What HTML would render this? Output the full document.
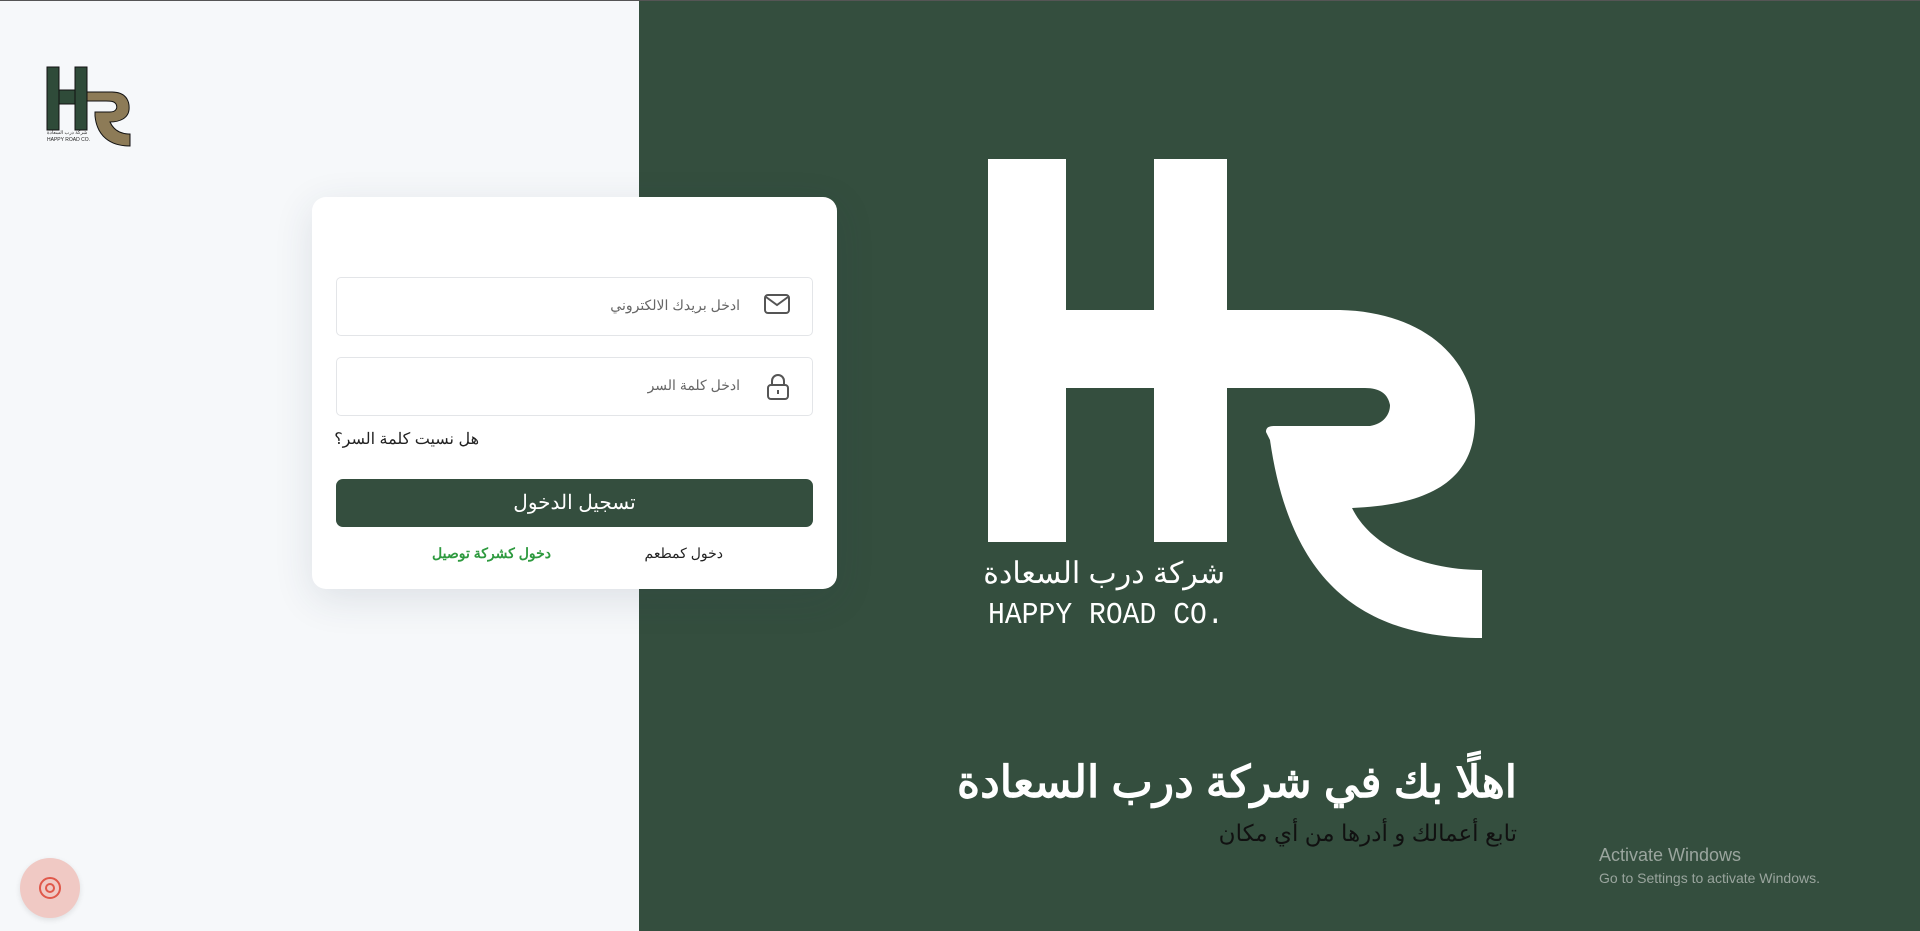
<!DOCTYPE html>
<html><head><meta charset="utf-8"><style>
*{box-sizing:border-box;margin:0;padding:0}
body{width:1920px;height:931px;overflow:hidden;background:#f6f8fa;font-family:"Liberation Sans","Noto Sans CJK SC",sans-serif;position:relative}
.topline{position:absolute;left:0;top:0;width:1920px;height:1px;background:#555}
.right{position:absolute;left:639px;top:1px;width:1281px;height:930px;background:#344e3e}
.card{position:absolute;left:312px;top:197px;width:525px;height:392px;background:#fff;border-radius:14px;box-shadow:0 10px 40px rgba(40,60,80,.12)}
.inp{position:absolute;left:24px;width:477px;height:59px;border:1px solid #e3e5e8;border-radius:5px;direction:rtl;font-size:14px;color:#666}
.inp span{position:absolute;right:72px;top:19px}
.inp svg{position:absolute;right:22px;top:16px}
.t{position:absolute;white-space:nowrap;direction:rtl}
</style></head><body>
<div class="topline"></div>
<div class="right"></div>
<svg style="position:absolute;left:0;top:0" width="1920" height="931">
<g fill="#fff">
<rect x="988" y="159" width="78" height="383"/>
<rect x="1154" y="159" width="73" height="383"/>
<rect x="1066" y="310" width="88" height="78"/>
<path d="M1227,310 L1340,310 C1425,312 1475,360 1475,420 C1475,480 1430,505 1352,508 C1370,545 1420,570 1482,570 L1482,638 C1360,638 1290,580 1270,440 L1266,432 C1266,428 1268,426 1275,426 L1370,426 C1383,424 1390,415 1390,405 C1388,394 1380,388 1365,388 L1227,388 Z"/>
</g>
<g>
<rect x="47" y="67" width="12" height="63" fill="#2f4b39" stroke="#111" stroke-width="1"/>
<rect x="75" y="67" width="12" height="63" fill="#2f4b39" stroke="#111" stroke-width="1"/>
<rect x="59" y="90" width="16" height="14" fill="#2f4b39" stroke="#111" stroke-width="1"/>
<path d="M87,92 L112,92 C125,92 130,100 129,110 C128,118 120,122 110,122 C114,131 122,134 130,134 L130,146 C110,146 97,136 95,116 L95,112 L110,112 C116,112 118,108 116,104 C114,101 110,101 106,101 L87,101 Z" fill="#8d7b57" stroke="#111" stroke-width="1"/>
</g>
</svg>
<div class="t" style="left:47px;top:130px;font-size:5px;color:#333">شركة درب السعادة</div>
<div class="t" style="left:47px;top:137px;font-size:5px;color:#222;direction:ltr">HAPPY ROAD CO.</div>
<div class="t" style="left:969px;top:556px;font-size:30px;color:#fff;width:256px;text-align:right;font-weight:300">شركة درب السعادة</div>
<div class="t" style="left:988px;top:598px;font-size:31px;color:#fff;direction:ltr;font-family:'Liberation Mono',monospace;transform:scaleX(0.905);transform-origin:left top">HAPPY ROAD CO.</div>
<div class="t" style="right:403px;top:757px;font-size:44px;font-weight:bold;color:#fff">اهلًا بك في شركة درب السعادة</div>
<div class="t" style="right:403px;top:820px;font-size:23px;color:#111">تابع أعمالك و أدرها من أي مكان</div>
<div class="t" style="left:1599px;top:845px;font-size:18px;color:#9aa59e;direction:ltr">Activate Windows</div>
<div class="t" style="left:1599px;top:870px;font-size:14px;color:#9aa59e;direction:ltr">Go to Settings to activate Windows.</div>
<div class="card">
<div class="inp" style="top:80px"><svg width="26" height="20" viewBox="0 0 26 20"><rect x="1" y="1" width="24" height="18" rx="3" fill="none" stroke="#555" stroke-width="2"/><path d="M2,3 L13,11 L24,3" fill="none" stroke="#555" stroke-width="2"/></svg><span>ادخل بريدك الالكتروني</span></div>
<div class="inp" style="top:160px"><svg width="24" height="28" viewBox="0 0 24 28" style="top:15px"><path d="M6,12 V8 a6,6 0 0 1 12,0 V12" fill="none" stroke="#555" stroke-width="2"/><rect x="2" y="12" width="20" height="14" rx="3" fill="none" stroke="#555" stroke-width="2"/><rect x="11" y="17" width="2" height="4" fill="#555"/></svg><span>ادخل كلمة السر</span></div>
<div class="t" style="left:24px;top:232px;font-size:16px;color:#222;width:143px;text-align:right">هل نسيت كلمة السر؟</div>
<div style="position:absolute;left:24px;top:282px;width:477px;height:48px;background:#344e3e;border-radius:7px;color:#fff;font-size:20px;text-align:center;line-height:48px;direction:rtl">تسجيل الدخول</div>
<div class="t" style="left:115px;top:348px;font-size:14px;color:#2e9a3f;font-weight:bold;width:124px;text-align:right">دخول كشركة توصيل</div>
<div class="t" style="left:330px;top:348px;font-size:14px;color:#222;width:81px;text-align:right">دخول كمطعم</div>
</div>
<div style="position:absolute;left:20px;top:858px;width:60px;height:60px;border-radius:50%;background:#f0c9c4;box-shadow:0 2px 6px rgba(0,0,0,.1)"><svg width="60" height="60" viewBox="0 0 60 60"><circle cx="30" cy="30" r="10" fill="none" stroke="#e0584a" stroke-width="2"/><circle cx="30" cy="30" r="4" fill="none" stroke="#e0584a" stroke-width="2"/></svg></div>
</body></html>
